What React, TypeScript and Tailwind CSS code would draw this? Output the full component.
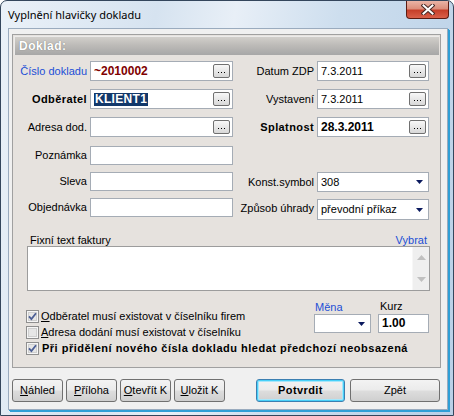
import React from "react";

// ─── Small pieces ───────────────────────────────────────────────────

function Dots() {
  return (
    <div className="w-[17px] h-[14px] shrink-0 rounded-[2px] border border-[#707070] bg-gradient-to-b from-[#f8f8f8] to-[#d8d8d8] flex items-end justify-center gap-[2px] pb-[4px]">
      <span className="w-[1px] h-[1px] bg-black" />
      <span className="w-[1px] h-[1px] bg-black" />
      <span className="w-[1px] h-[1px] bg-black" />
    </div>
  );
}

function Arrow() {
  return (
    <svg width="7" height="4" viewBox="0 0 7 4" className="shrink-0">
      <path d="M0 0h7L3.5 4z" fill="#0b1a5e" />
    </svg>
  );
}

function Box({
  className = "",
  children,
  dots,
}: {
  className?: string;
  children?: React.ReactNode;
  dots?: boolean;
}) {
  return (
    <div
      className={
        "bg-white border border-[#a5acb5] flex items-center pl-[3px] pr-[2px] shrink-0 " +
        className
      }
    >
      <div className="flex-1 min-w-0 whitespace-nowrap overflow-hidden">{children}</div>
      {dots && <Dots />}
    </div>
  );
}

function Select({ className = "", children }: { className?: string; children?: React.ReactNode }) {
  return (
    <div
      className={
        "bg-white border border-[#a5acb5] flex items-center pl-[3px] pr-[5px] shrink-0 " + className
      }
    >
      <div className="flex-1 min-w-0 whitespace-nowrap overflow-hidden">{children}</div>
      <Arrow />
    </div>
  );
}

function Check({ on }: { on?: boolean }) {
  return (
    <svg width="13" height="13" viewBox="0 0 13 13" className="shrink-0">
      <rect x="0.5" y="0.5" width="12" height="12" fill="#f6f6f6" stroke="#8f8f8f" />
      <rect x="2.5" y="2.5" width="8" height="8" fill="#e6e6e6" stroke="#cfcfcf" />
      {on && (
        <path d="M3 6.3 L5.4 9 L10 3.2" fill="none" stroke="#4c5f95" strokeWidth="1.8" />
      )}
    </svg>
  );
}

function Btn({
  className = "",
  children,
}: {
  className?: string;
  children: React.ReactNode;
}) {
  return (
    <div
      className={
        "h-[23px] shrink-0 rounded-[3px] border border-[#707070] bg-[linear-gradient(180deg,#f3f3f3_0%,#ebebeb_48%,#dddddd_52%,#cfcfcf_100%)] flex items-center justify-center " +
        className
      }
    >
      {children}
    </div>
  );
}

function CloseBtn() {
  return (
    <div className="mr-[4px] w-[43px] h-[18px] rounded-b-[4px] border border-t-0 border-[#5b1b12] bg-[linear-gradient(180deg,#eab4a6_0%,#dc8f7c_45%,#c63f2a_55%,#d9604a_100%)] flex items-center justify-center">
      <svg width="14" height="11" viewBox="0 0 14 11">
        <path d="M2.5 1.5 L11.5 9.5 M11.5 1.5 L2.5 9.5" stroke="#4a2a26" strokeWidth="4" strokeLinecap="square" />
        <path d="M2.5 1.5 L11.5 9.5 M11.5 1.5 L2.5 9.5" stroke="#ffffff" strokeWidth="2" strokeLinecap="square" />
      </svg>
    </div>
  );
}

// ─── Main ───────────────────────────────────────────────────────────

export default function App() {
  const bold = "font-bold tracking-[0.4px]";
  return (
    <div className="w-[454px] h-[416px] bg-white font-['Liberation_Sans',Arial,sans-serif] text-[11px] leading-[13px] text-black">
      <div className="w-[454px] h-[416px] flex flex-col rounded-t-[7px] border border-[#34465c] overflow-hidden bg-[linear-gradient(100deg,#eaf1f8_0%,#d6e3f0_30%,#e8eff7_45%,#cddeee_65%,#b9d0e7_100%)]">
        {/* title bar */}
        <div className="h-[27px] shrink-0 flex items-start justify-between">
          <div className="pl-[7px] pt-[6px] font-['Noto_Sans',sans-serif] text-[11px] leading-[15px]">
            Vyplnění hlavičky dokladu
          </div>
          <CloseBtn />
        </div>

        <div className="flex-1 flex pl-[7px] pr-[5px] pb-[5px] min-h-0">
          <div className="flex-1 flex flex-col bg-[#f0f0f0] border border-[#9aabbe] shadow-[1px_1px_0_#2f9fd6,2px_2px_0_#2f9fd6]">
            {/* panel */}
            <div className="mt-[5px] ml-[3px] w-[429px] h-[334px] border border-[#a0a0a0] bg-[#e6e2de] p-[1px] flex flex-col">
              <div className="h-[19px] shrink-0 border-t border-l border-[#ecebea] bg-[linear-gradient(180deg,#d2cfcb_0%,#bdbbb8_45%,#a7a7a7_100%)] flex items-center pl-[4px]">
                <span className="text-white font-bold text-[12px] tracking-[0.5px] [text-shadow:0_0_1px_#6d6d6d]">
                  Doklad:
                </span>
              </div>

              <div className="flex flex-col pt-[6px]">
                {/* row 1 */}
                <div className="flex items-center h-[20px]">
                  <div className="w-[76px] text-right pr-[3px] text-[#1c4fd6]">Číslo dokladu</div>
                  <Box className="w-[143px] h-[20px]" dots>
                    <span className="font-bold text-[12px] text-[#800000]">~2010002</span>
                  </Box>
                  <div className="w-[84px] text-right pr-[3px]">Datum ZDP</div>
                  <Box className="w-[112px] h-[20px]" dots>
                    7.3.2011
                  </Box>
                </div>
                {/* row 2 */}
                <div className="flex items-center h-[20px] mt-[8px]">
                  <div className={"w-[76px] text-right pr-[3px] " + bold}>Odběratel</div>
                  <Box className="w-[143px] h-[20px]" dots>
                    <span className="bg-[#12386a] text-white font-bold text-[12px] tracking-[0.3px] px-[1px] py-[1px]">
                      KLIENT1
                    </span>
                  </Box>
                  <div className="w-[84px] text-right pr-[3px]">Vystavení</div>
                  <Box className="w-[112px] h-[20px]" dots>
                    7.3.2011
                  </Box>
                </div>
                {/* row 3 */}
                <div className="flex items-center h-[20px] mt-[8px]">
                  <div className="w-[76px] text-right pr-[3px]">Adresa dod.</div>
                  <Box className="w-[143px] h-[20px]" dots />
                  <div className={"w-[84px] text-right pr-[3px] " + bold}>Splatnost</div>
                  <Box className="w-[112px] h-[20px]" dots>
                    <span className="font-bold text-[12px]">28.3.2011</span>
                  </Box>
                </div>
                {/* row 4 */}
                <div className="flex items-center h-[19px] mt-[9px]">
                  <div className="w-[76px] text-right pr-[3px]">Poznámka</div>
                  <Box className="w-[143px] h-[19px]" />
                </div>
                {/* row 5 */}
                <div className="flex items-start h-[19px] mt-[7px]">
                  <div className="w-[76px] h-[19px] flex items-center justify-end pr-[3px]">Sleva</div>
                  <Box className="w-[143px] h-[19px]" />
                  <div className="w-[84px] h-[20px] flex items-center justify-end pr-[3px]">Konst.symbol</div>
                  <Select className="w-[112px] h-[20px]">308</Select>
                </div>
                {/* row 6 */}
                <div className="flex items-start h-[19px] mt-[7px]">
                  <div className="w-[76px] h-[19px] flex items-center justify-end pr-[3px]">Objednávka</div>
                  <Box className="w-[143px] h-[19px]" />
                  <div className="w-[84px] h-[21px] flex items-center justify-end pr-[3px] whitespace-nowrap">
                    Způsob úhrady
                  </div>
                  <Select className="w-[112px] h-[21px] mt-[1px]">převodní příkaz</Select>
                </div>

                {/* fixed text */}
                <div className="ml-[13px] w-[403px] mt-[17px] h-[12px] flex justify-between items-end px-[3px] leading-[12px]">
                  <span>Fixní text faktury</span>
                  <span className="text-[#1c4fd6]">Vybrat</span>
                </div>
                <div className="ml-[13px] w-[403px] h-[45px] bg-white border border-[#9c9c9c] flex justify-end">
                  <div className="w-[17px] h-full bg-[#efefef] border-l border-[#f7f7f7] flex flex-col items-center justify-between py-[8px]">
                    <svg width="9" height="5" viewBox="0 0 9 5">
                      <path d="M0 5h9L4.5 0z" fill="#c0c0c0" />
                    </svg>
                    <svg width="9" height="5" viewBox="0 0 9 5">
                      <path d="M0 0h9L4.5 5z" fill="#c0c0c0" />
                    </svg>
                  </div>
                </div>

                {/* checks + currency */}
                <div className="ml-[12px] mt-[10px] flex items-start">
                  <div className="w-[288px] pt-[7px] flex flex-col">
                    <div className="h-[16px] flex items-center gap-[2px]">
                      <Check on />
                      <span className="whitespace-nowrap">
                        <span className="underline">O</span>dběratel musí existovat v číselníku firem
                      </span>
                    </div>
                    <div className="h-[16px] flex items-center gap-[2px]">
                      <Check />
                      <span className="whitespace-nowrap">
                        <span className="underline">A</span>dresa dodání musí existovat v číselníku
                      </span>
                    </div>
                  </div>
                  <div className="w-[57px] flex flex-col">
                    <div className="h-[12px] leading-[12px] pl-[1px] text-[#1c4fd6]">Měna</div>
                    <Select className="w-[57px] h-[19px] mt-[1px] justify-end">{""}</Select>
                  </div>
                  <div className="w-[51px] ml-[7px] flex flex-col">
                    <div className="h-[12px] leading-[10px] pl-[2px]">Kurz</div>
                    <Box className="w-[51px] h-[19px] mt-[1px]">
                      <span className="font-bold text-[12px]">1.00</span>
                    </Box>
                  </div>
                </div>
                <div className="ml-[12px] h-[16px] flex items-center gap-[3px]">
                  <Check on />
                  <span className="whitespace-nowrap font-bold tracking-[0.5px]">
                    Při přidělení nového čísla dokladu hledat předchozí neobsazená
                  </span>
                </div>
              </div>
            </div>

            {/* buttons */}
            <div className="ml-[3px] mt-[11px] flex items-center">
              <div className="flex gap-[3px]">
                <Btn className="w-[51px]">
                  <span>
                    <span className="underline">N</span>áhled
                  </span>
                </Btn>
                <Btn className="w-[51px]">
                  <span>
                    <span className="underline">P</span>říloha
                  </span>
                </Btn>
                <Btn className="w-[51px]">
                  <span>
                    <span className="underline">O</span>tevřít K
                  </span>
                </Btn>
                <Btn className="w-[51px]">
                  <span>
                    <span className="underline">U</span>ložit K
                  </span>
                </Btn>
              </div>
              <Btn className="w-[89px] ml-[31px] !border-[#3c7fb1] shadow-[inset_0_0_0_1px_#48d0f8,inset_0_0_0_2px_#a8e6fa]">
                <span className="font-bold tracking-[0.4px]">Potvrdit</span>
              </Btn>
              <Btn className="w-[90px] ml-[5px]">Zpět</Btn>
            </div>
          </div>
        </div>
      </div>
    </div>
  );
}
